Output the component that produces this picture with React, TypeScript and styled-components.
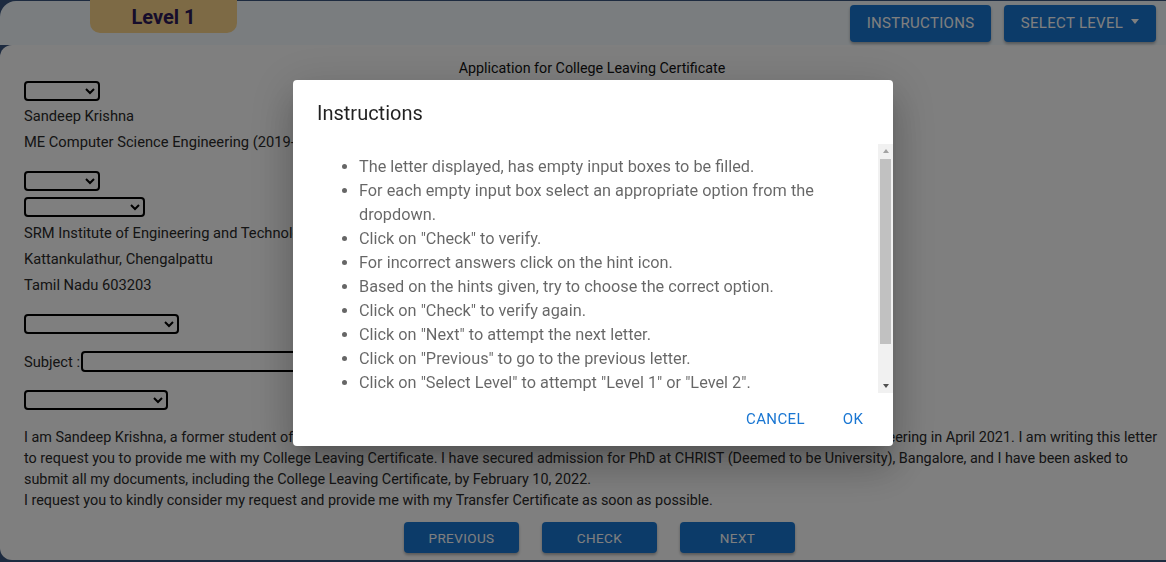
import * as React from 'react';
import styled, { createGlobalStyle } from 'styled-components';

const primary = '#1976d2';
const textDark = '#2a2a2a';

const GlobalStyle = createGlobalStyle`
  html, body {
    margin: 0;
    height: 100%;
    overflow: hidden;
    background: #3a5680;
    font-family: Roboto, "Liberation Sans", Arial, sans-serif;
  }
  * { box-sizing: border-box; }
`;

const Page = styled.div`
  padding-top: 1px;
`;

const Header = styled.header`
  display: flex;
  align-items: flex-start;
  height: 44px;
  background: #f4fbff;
  border-top-left-radius: 16px;
  padding-right: 10px;
`;

const LevelBadge = styled.div`
  margin: -1px 0 0 90px;
  width: 147px;
  height: 33px;
  border-radius: 0 0 10px 10px;
  background: #fad48a;
  color: #2e1b58;
  font-size: 20px;
  font-weight: 700;
  display: flex;
  align-items: center;
  justify-content: center;
`;

const HeaderActions = styled.div`
  margin-left: auto;
  margin-top: 4px;
  display: flex;
  gap: 13px;
`;

const TopButton = styled.button<{ $w: number }>`
  width: ${({ $w }) => $w}px;
  height: 37px;
  border: none;
  border-radius: 4px;
  background: ${primary};
  color: #fff;
  font-family: inherit;
  font-size: 15px;
  letter-spacing: 0.3px;
  text-transform: uppercase;
  display: flex;
  align-items: center;
  justify-content: center;
  padding-bottom: 2px;
  box-shadow: 0 2px 3px rgba(0, 0, 0, 0.3);
`;

const Caret = styled.span`
  display: inline-block;
  margin-left: 8px;
  border-top: 5px solid #fff;
  border-left: 4.5px solid transparent;
  border-right: 4.5px solid transparent;
  transform: translateY(-2px);
`;

const Card = styled.main`
  background: #fff;
  height: 515px;
  border-radius: 12px 0 0 12px;
  padding: 13px 6px 0 24px;
  color: ${textDark};
  font-size: 14.7px;
`;

const Title = styled.div`
  text-align: center;
  font-size: 14.3px;
  line-height: 20px;
  color: #111;
`;

const Block = styled.div<{ $mt: number }>`
  margin-top: ${({ $mt }) => $mt}px;
`;

const Line = styled.div`
  line-height: 26px;
`;

const Dropdown = styled.select<{ $w: number }>`
  display: block;
  width: ${({ $w }) => $w}px;
  height: 20px;
  border: 2px solid #000;
  border-radius: 4px;
  background: #fff;
  font-size: 13px;
`;

const SubjectRow = styled.div`
  display: flex;
  align-items: center;
  height: 21px;
`;

const SubjectInput = styled.input`
  width: 420px;
  height: 21px;
  border: 2px solid #000;
  border-radius: 4px;
  margin-left: 1px;
`;

const Paragraph = styled.p`
  margin: 0 -4px 0 0;
  font-size: 14.4px;
  line-height: 21px;
`;

const NavRow = styled.div`
  display: flex;
  justify-content: center;
  gap: 23px;
  margin-top: 11px;
  padding-left: 15px;
`;

const NavButton = styled.button`
  width: 115px;
  height: 31px;
  border: none;
  border-radius: 4px;
  background: ${primary};
  color: #fff;
  font-family: inherit;
  font-size: 13.5px;
  font-weight: 400;
  letter-spacing: 0.4px;
  box-shadow: 0 2px 3px rgba(0, 0, 0, 0.3);
`;

const Backdrop = styled.div`
  position: fixed;
  inset: 0;
  background: rgba(0, 0, 0, 0.5);
  display: flex;
  align-items: center;
  justify-content: center;
  padding: 0 0 36px 20px;
`;

const Dialog = styled.div`
  width: 600px;
  background: #fff;
  border-radius: 4px;
  box-shadow: 0 11px 15px -7px rgba(0, 0, 0, 0.2), 0 24px 38px 3px rgba(0, 0, 0, 0.14),
    0 9px 46px 8px rgba(0, 0, 0, 0.12);
  display: flex;
  flex-direction: column;
`;

const DialogTitle = styled.h2`
  margin: 0;
  padding: 17px 24px 15px;
  font-size: 20px;
  font-weight: 400;
  line-height: 32px;
  color: rgba(0, 0, 0, 0.87);
`;

const DialogBody = styled.div`
  display: flex;
  height: 249px;
`;

const DialogContent = styled.div`
  flex: 1;
  overflow: hidden;
  padding: 1px 24px 20px;
`;

const ScrollRail = styled.div`
  width: 15px;
  background: #f1f1f1;
  display: flex;
  flex-direction: column;
  align-items: center;
`;

const ScrollArrow = styled.div<{ $down?: boolean; $color: string }>`
  flex: none;
  height: 14px;
  display: flex;
  align-items: center;
  justify-content: center;
  margin-top: ${({ $down }) => ($down ? 'auto' : '0')};
  &::after {
    content: '';
    border-left: 3.5px solid transparent;
    border-right: 3.5px solid transparent;
    ${({ $down, $color }) =>
      $down ? `border-top: 4px solid ${$color};` : `border-bottom: 4px solid ${$color};`}
  }
`;

const ScrollThumb = styled.div`
  width: 11px;
  height: 185px;
  margin-top: 1px;
  background: #c1c1c1;
`;

const Steps = styled.ul`
  margin: 10px 0 22px;
  padding-left: 42px;
  font-size: 16.3px;
  line-height: 24px;
  color: rgba(0, 0, 0, 0.6);
`;

const DialogActions = styled.div`
  display: flex;
  justify-content: flex-end;
  gap: 8px;
  padding: 8px 8px 9px;
`;

const TextButton = styled.button`
  min-width: 64px;
  height: 36px;
  padding: 6px 8px;
  border: none;
  background: none;
  color: ${primary};
  font-family: inherit;
  font-size: 15px;
  font-weight: 400;
  letter-spacing: 0.4px;
`;

const steps = [
  'The letter displayed, has empty input boxes to be filled.',
  'For each empty input box select an appropriate option from the dropdown.',
  'Click on "Check" to verify.',
  'For incorrect answers click on the hint icon.',
  'Based on the hints given, try to choose the correct option.',
  'Click on "Check" to verify again.',
  'Click on "Next" to attempt the next letter.',
  'Click on "Previous" to go to the previous letter.',
  'Click on "Select Level" to attempt "Level 1" or "Level 2".',
];

const App: React.FunctionComponent = () => (
  <Page>
    <GlobalStyle />
    <Header>
      <LevelBadge>Level 1</LevelBadge>
      <HeaderActions>
        <TopButton $w={141}>Instructions</TopButton>
        <TopButton $w={152}>
          Select Level
          <Caret />
        </TopButton>
      </HeaderActions>
    </Header>
    <Card>
      <Title>Application for College Leaving Certificate</Title>
      <Block $mt={3}>
        <Dropdown $w={76}><option /></Dropdown>
      </Block>
      <Block $mt={2}>
        <Line>Sandeep Krishna</Line>
        <Line>ME Computer Science Engineering (2019-2021)</Line>
      </Block>
      <Block $mt={16}>
        <Dropdown $w={76}><option /></Dropdown>
      </Block>
      <Block $mt={6}>
        <Dropdown $w={121}><option /></Dropdown>
      </Block>
      <Block $mt={3}>
        <Line>SRM Institute of Engineering and Technology</Line>
        <Line>Kattankulathur, Chengalpattu</Line>
        <Line>Tamil Nadu 603203</Line>
      </Block>
      <Block $mt={16}>
        <Dropdown $w={155}><option /></Dropdown>
      </Block>
      <Block $mt={17}>
        <SubjectRow>
          Subject :<SubjectInput />
        </SubjectRow>
      </Block>
      <Block $mt={18}>
        <Dropdown $w={144}><option /></Dropdown>
      </Block>
      <Block $mt={17}>
        <Paragraph>
          I am Sandeep Krishna, a former student of SRM Institute of Engineering and Technology. I
          completed my ME in Computer Science Engineering in April 2021. I am writing this letter
          to request you to provide me with my College Leaving Certificate. I have secured admission
          for PhD at CHRIST (Deemed to be University), Bangalore, and I have been asked to submit all
          my documents, including the College Leaving Certificate, by February 10, 2022.
        </Paragraph>
        <Paragraph>
          I request you to kindly consider my request and provide me with my Transfer Certificate as
          soon as possible.
        </Paragraph>
      </Block>
      <NavRow>
        <NavButton>PREVIOUS</NavButton>
        <NavButton>CHECK</NavButton>
        <NavButton>NEXT</NavButton>
      </NavRow>
    </Card>

    <Backdrop>
      <Dialog>
        <DialogTitle>Instructions</DialogTitle>
        <DialogBody>
          <DialogContent>
            <Steps>
              {steps.map((s) => (
                <li key={s}>{s}</li>
              ))}
            </Steps>
          </DialogContent>
          <ScrollRail>
            <ScrollArrow $color="#a3a3a3" />
            <ScrollThumb />
            <ScrollArrow $down $color="#505050" />
          </ScrollRail>
        </DialogBody>
        <DialogActions>
          <TextButton>CANCEL</TextButton>
          <TextButton>OK</TextButton>
        </DialogActions>
      </Dialog>
    </Backdrop>
  </Page>
);

export default App;
